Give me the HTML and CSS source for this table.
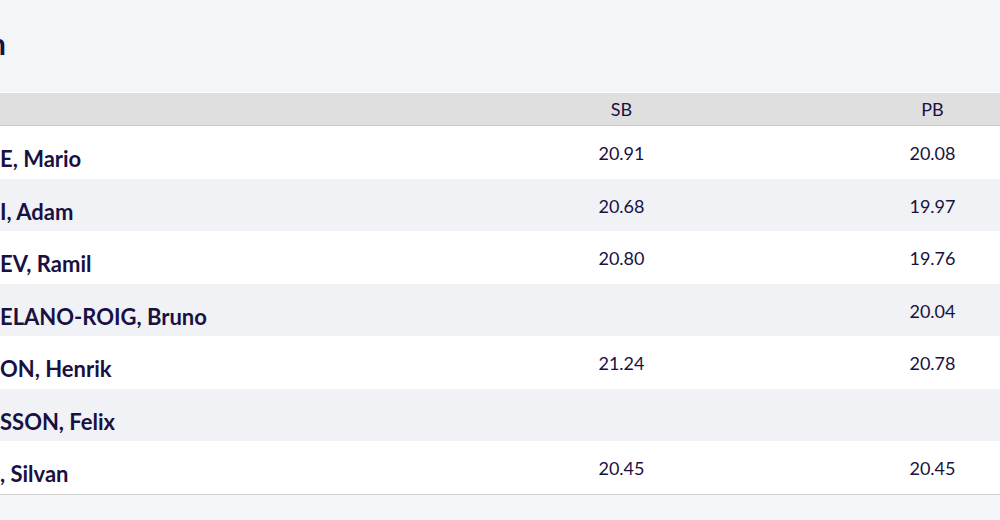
FILE: index.html
```html
<!DOCTYPE html>
<html lang="en">
<head>
<meta charset="utf-8">
<title>Start list</title>
<link rel="stylesheet" href="styles.css">
</head>
<body>
<div class="page">
  <header class="title-bar">
    <h2 class="title"><span class="title-text">Men</span></h2>
  </header>
  <table class="results">
    <thead>
      <tr>
        <th class="col-name"></th>
        <th class="col-num">SB</th>
        <th class="col-num">PB</th>
      </tr>
    </thead>
    <tbody>
      <tr><td class="name">E, Mario</td><td class="num">20.91</td><td class="num">20.08</td></tr>
      <tr><td class="name">I, Adam</td><td class="num">20.68</td><td class="num">19.97</td></tr>
      <tr><td class="name">EV, Ramil</td><td class="num">20.80</td><td class="num">19.76</td></tr>
      <tr><td class="name">ELANO-ROIG, Bruno</td><td class="num"></td><td class="num">20.04</td></tr>
      <tr><td class="name">ON, Henrik</td><td class="num">21.24</td><td class="num">20.78</td></tr>
      <tr><td class="name">SSON, Felix</td><td class="num"></td><td class="num"></td></tr>
      <tr><td class="name">, Silvan</td><td class="num">20.45</td><td class="num">20.45</td></tr>
    </tbody>
  </table>
</div>
</body>
</html>
```

FILE: styles.css
```css
html, body {
  margin: 0;
  padding: 0;
  background: #f3f5f8;
  overflow: hidden;
}

body {
  font-family: Lato, "Open Sans", sans-serif;
  color: #181142;
}

.page {
  width: 1000px;
  overflow: hidden;
}

.title-bar {
  height: 92px;
  display: flex;
  align-items: center;
  padding-bottom: 6px;
  box-sizing: border-box;
}

.title {
  margin: 0 0 0 -55px;
  font-size: 30px;
  font-weight: 700;
  line-height: 1;
}

.results {
  width: 1088px;
  border-collapse: collapse;
  table-layout: fixed;
}

.results thead tr {
  background: #dfdfdf;
  border-top: 1px solid #ffffff;
  border-bottom: 1px solid #cbcbcb;
}

.results th {
  height: 32px;
  padding: 0;
  font-size: 18px;
  font-weight: 400;
  text-align: center;
}

.col-name {
  width: 466px;
}

.col-num {
  width: 311px;
}

.results tbody tr {
  background: #ffffff;
}

.results tbody tr:nth-child(even) {
  background: #f0f2f6;
}

.results tbody tr:last-child {
  border-bottom: 1px solid #d3d3d3;
}

.results td {
  padding: 0;
  vertical-align: top;
}

.name {
  height: 33.57px;
  padding-top: 19px !important;
  font-size: 22px;
  font-weight: 700;
  white-space: nowrap;
}

.num {
  height: 36.57px;
  padding-top: 16px !important;
  font-size: 18px;
  text-align: center;
}
```
